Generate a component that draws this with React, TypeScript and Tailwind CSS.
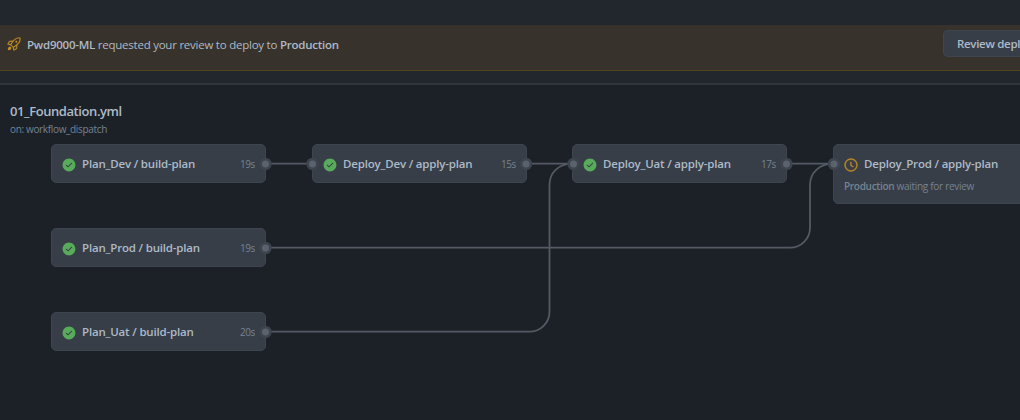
import { GoCheckCircleFill, GoClock, GoRocket } from "react-icons/go";

type Job = {
  name: string;
  time?: string;
  place: string;
  waiting?: boolean;
};

const jobs: Job[] = [
  { name: "Plan_Dev / build-plan", time: "19s", place: "left-[51px] top-[59px] h-[39px] w-[215px]" },
  { name: "Plan_Prod / build-plan", time: "19s", place: "left-[51px] top-[143px] h-[39px] w-[215px]" },
  { name: "Plan_Uat / build-plan", time: "20s", place: "left-[51px] top-[227px] h-[39px] w-[215px]" },
  { name: "Deploy_Dev / apply-plan", time: "15s", place: "left-[312px] top-[59px] h-[39px] w-[215px]" },
  { name: "Deploy_Uat / apply-plan", time: "17s", place: "left-[572px] top-[59px] h-[39px] w-[215px]" },
  { name: "Deploy_Prod / apply-plan", place: "left-[833px] top-[59px] h-[60px] w-[215px]", waiting: true },
];

const ports = [
  [265.5, 79], [312.5, 79], [526, 79], [573.5, 79], [786.5, 79], [834, 79], [265.5, 163], [265.5, 247],
];

function JobCard({ job }: { job: Job }) {
  return (
    <div className={`absolute rounded-[5px] border border-[#3e454f] bg-[#373e47] px-[10px] ${job.place}`}>
      <div className="flex h-[37px] items-center pt-[2px]">
        {job.waiting ? (
          <GoClock className="size-[14px] shrink-0 stroke-[#c08a25] stroke-[0.8] text-[#c08a25]" />
        ) : (
          <GoCheckCircleFill className="size-[14px] shrink-0 text-[#57ab5a]" />
        )}
        <span className="mb-px ml-[6px] text-[11.5px] font-semibold tracking-[-0.18px] whitespace-nowrap text-[#adbac7]">
          {job.name}
        </span>
        {job.time && <span className="ml-auto text-[10px] tracking-[-0.4px] text-[#768390]">{job.time}</span>}
      </div>
      {job.waiting && (
        <p className="-mt-[3px] text-[10px] leading-[15px] tracking-[-0.3px] whitespace-nowrap text-[#768390]">
          <b className="font-semibold">Production</b> waiting for review
        </p>
      )}
    </div>
  );
}

export default function App() {
  return (
    <div className="flex h-[420px] w-[1020px] flex-col overflow-hidden bg-[#22272e] font-['Open_Sans',sans-serif] text-[#adbac7]">
      <div className="mt-[25px] flex h-[46px] shrink-0 items-center border-b border-[#54431f] bg-[#37322b] pb-[8px] pl-[7px]">
        <GoRocket className="size-[14px] shrink-0 stroke-[#c69026] stroke-[0.4] text-[#c69026]" />
        <p className="ml-[6px] pt-[2px] text-[11.5px] tracking-[-0.24px] whitespace-nowrap">
          <b className="font-semibold">Pwd9000-ML</b> requested your review to deploy to{" "}
          <b className="font-semibold">Production</b>
        </p>
        <button className="ml-auto h-[27px] w-[77px] shrink-0 overflow-hidden rounded-l-[5px] border border-r-0 border-[#3f464f] bg-[#373e47] pl-[13px] text-left text-[11.5px] font-semibold tracking-[-0.3px] whitespace-nowrap">
          Review deployments
        </button>
      </div>
      <main className="relative mt-[12px] flex-1 border-t-2 border-[#31363e] bg-[#1c2128]">
        <h1 className="mt-[16px] ml-[10px] text-[13px] leading-[20px] font-semibold tracking-[-0.42px]">
          01_Foundation.yml
        </h1>
        <p className="ml-[10px] text-[10px] leading-[16px] tracking-[-0.34px] text-[#768390]">
          on: workflow_dispatch
        </p>
        {jobs.map((job) => (
          <JobCard key={job.name} job={job} />
        ))}
        <svg className="absolute top-0 left-0 h-[335px] w-[1020px]" viewBox="0 0 1020 335" fill="none">
          <g stroke="#545a64" strokeWidth="1.8">
            <path d="M265 78.7H312M526 78.7H573M787 78.7H834" />
            <path d="M265 162.7H790A20 20 0 0 0 810 142.7V100C810 88 819 78.7 834 78.7" />
            <path d="M265 246.7H529.5A20 20 0 0 0 549.5 226.7V100C549.5 88 558 78.7 573 78.7" />
          </g>
          {ports.map(([x, y]) => (
            <g key={`${x}-${y}`}>
              <circle cx={x} cy={y} r="6.2" fill="#3e444e" />
              <circle cx={x} cy={y} r="3.5" fill="#5a626d" />
            </g>
          ))}
        </svg>
      </main>
    </div>
  );
}
